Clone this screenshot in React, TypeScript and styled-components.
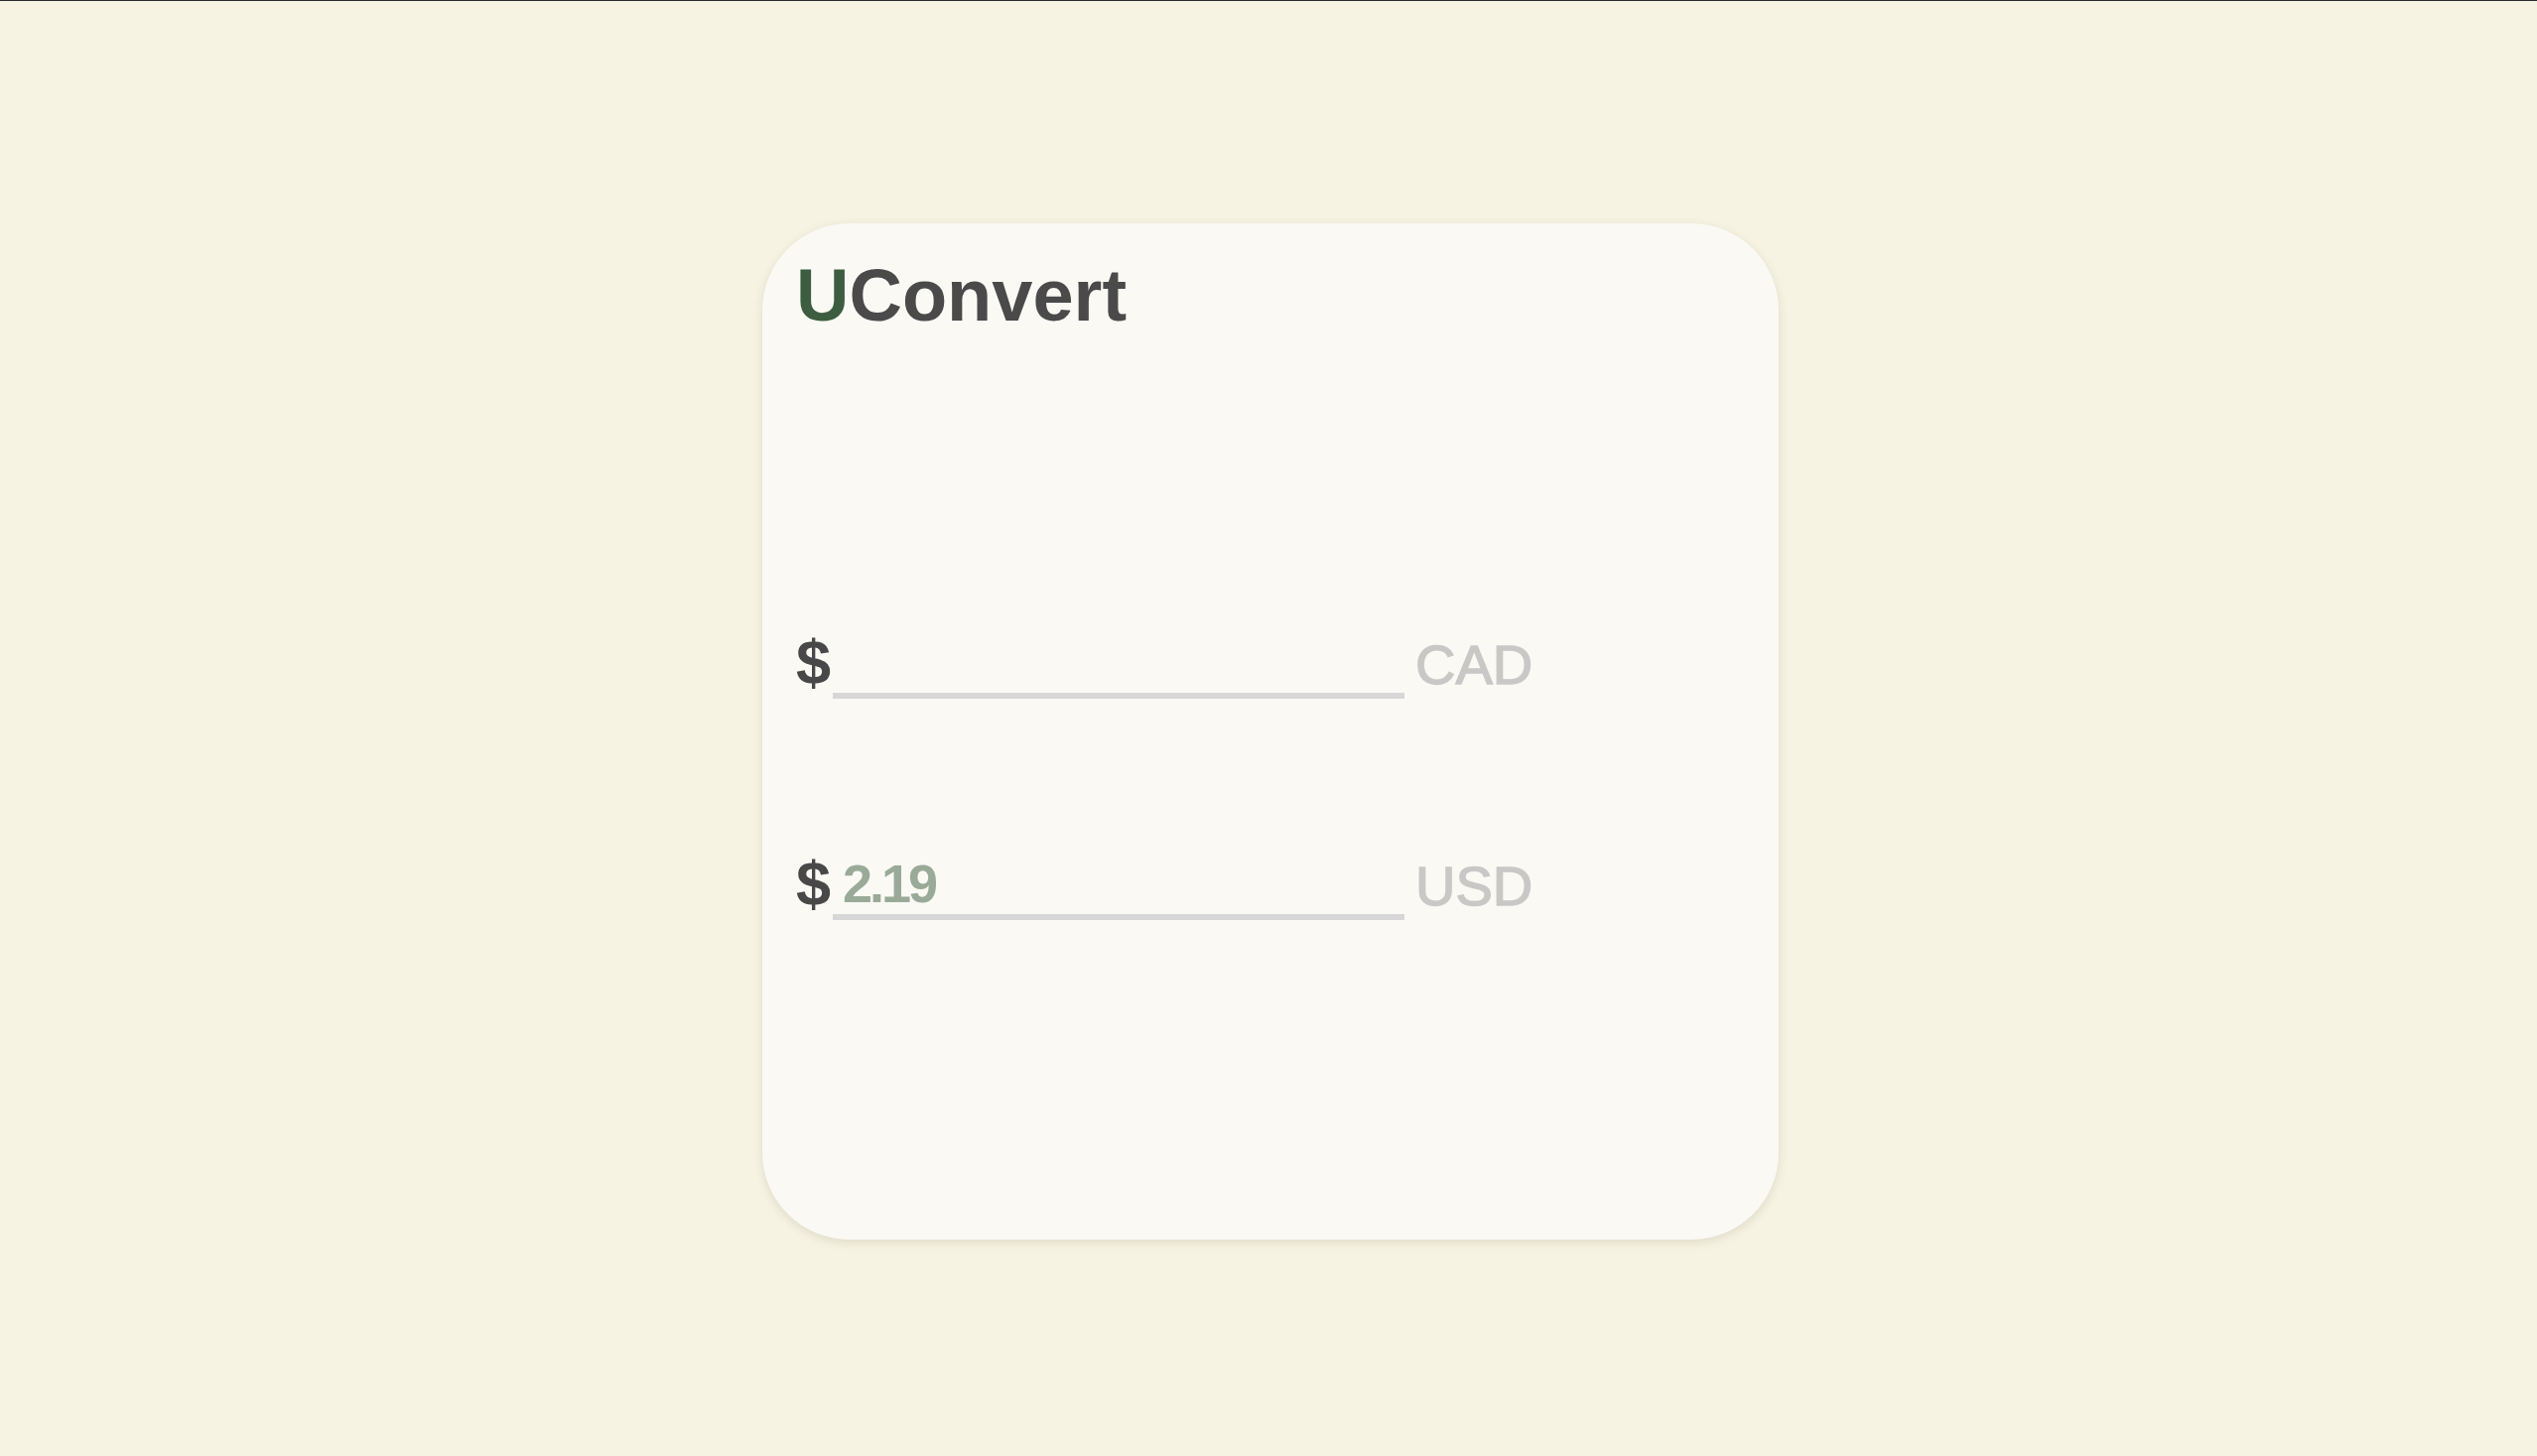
import React, { useState } from "react";
import styled, { createGlobalStyle } from "styled-components";

const GlobalStyle = createGlobalStyle`
  html, body {
    margin: 0;
    padding: 0;
    background: #f6f3e3;
  }
  body {
    font-family: "Liberation Sans", Arial, sans-serif;
  }
`;

const Page = styled.main`
  min-height: 100vh;
  box-sizing: border-box;
  border-top: 1px solid #2b2b2b;
  background: #f6f3e3;
  display: flex;
  justify-content: center;
  align-items: flex-start;
  padding: 224px 0 0 4px;
`;

const Card = styled.section`
  width: 1024px;
  height: 1024px;
  box-sizing: border-box;
  background: #faf9f4;
  border-radius: 88px;
  box-shadow: 0 3px 10px rgba(110, 100, 70, 0.16);
  padding: 36px 34px;
  display: flex;
  flex-direction: column;
`;

const Title = styled.h1`
  margin: 0;
  font-family: "Liberation Sans", Arial, sans-serif;
  font-weight: 700;
  font-size: 74px;
  line-height: 1;
  color: #4a4a4a;
`;

const Accent = styled.span`
  color: #3c5d3f;
`;

const Row = styled.div<{ $gap: number }>`
  display: flex;
  align-items: flex-end;
  margin-top: ${(p) => p.$gap}px;
`;

const Dollar = styled.span`
  font-family: "Liberation Sans", Arial, sans-serif;
  font-weight: 700;
  font-size: 63px;
  line-height: 1;
  color: #484848;
  margin-right: 2px;
  padding-bottom: 5px;
`;

const Field = styled.input`
  width: 576px;
  height: 68px;
  box-sizing: border-box;
  padding: 0 0 0 10px;
  margin: 0;
  border: none;
  border-bottom: 6px solid #d7d7d7;
  background: transparent;
  outline: none;
  font-family: "Liberation Sans", Arial, sans-serif;
  font-weight: 700;
  font-size: 54px;
  letter-spacing: -3px;
  color: #9aaa98;
`;

const Currency = styled.span`
  font-family: "Liberation Sans", Arial, sans-serif;
  font-weight: 400;
  font-size: 56px;
  line-height: 1;
  color: #c9c8c6;
  -webkit-text-stroke: 1.4px #c9c8c6;
  margin-left: 11px;
  padding-bottom: 6px;
`;

export default function App() {
  const [cad, setCad] = useState("");
  const [usd, setUsd] = useState("2.19");

  return (
    <>
      <GlobalStyle />
      <Page>
        <Card>
          <Title>
            <Accent>U</Accent>Convert
          </Title>
          <Row $gap={301}>
            <Dollar>$</Dollar>
            <Field value={cad} onChange={(e) => setCad(e.target.value)} aria-label="CAD amount" />
            <Currency>CAD</Currency>
          </Row>
          <Row $gap={155}>
            <Dollar>$</Dollar>
            <Field value={usd} onChange={(e) => setUsd(e.target.value)} aria-label="USD amount" />
            <Currency>USD</Currency>
          </Row>
        </Card>
      </Page>
    </>
  );
}
